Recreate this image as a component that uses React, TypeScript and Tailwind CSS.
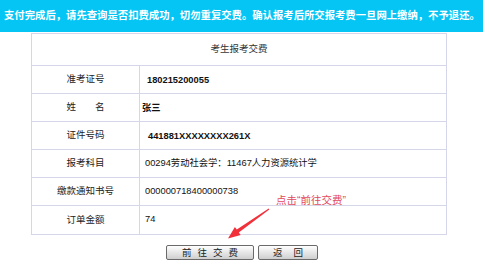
import React from 'react';

const FONT = { fontFamily: '"Liberation Sans", "Noto Sans CJK SC", sans-serif' };

type Row = { label: React.ReactNode; value: string; bold?: boolean; pad: string };

const rows: Row[] = [
  { label: '准考证号', value: '180215200055', bold: true, pad: 'pl-[7px]' },
  {
    label: (
      <span className="flex gap-[19px]">
        <span>姓</span>
        <span>名</span>
      </span>
    ),
    value: '张三',
    bold: true,
    pad: 'pl-[2px]',
  },
  { label: '证件号码', value: '441881XXXXXXXX261X', bold: true, pad: 'pl-[8px]' },
  { label: '报考科目', value: '00294劳动社会学：11467人力资源统计学', pad: 'pl-[5px]' },
  { label: '缴款通知书号', value: '000000718400000738', pad: 'pl-[5px]' },
  { label: '订单金额', value: '74', pad: 'pl-[5px]' },
];

function Arrow() {
  // 红色标注箭头
  return (
    <svg
      className="absolute left-0 top-0 pointer-events-none"
      width="483"
      height="260"
      viewBox="0 0 483 260"
    >
      <polygon
        points="268.7,208.6 236.8,229.5 234.9,226.9 228,238.5 240.7,235.1 238.8,232.5 269.3,209.6"
        fill="#f2303a"
      />
    </svg>
  );
}

export default function App() {
  return (
    <div className="relative w-[483px] h-[260px] overflow-hidden bg-white" style={FONT}>
      {/* 提示条 */}
      <div className="h-[32px] bg-[#05c5f5] flex items-center pl-[4px]">
        <span className="text-white font-bold text-[10.35px] whitespace-nowrap">
          支付完成后，请先查询是否扣费成功，切勿重复交费。确认报考后所交报考费一旦网上缴纳，不予退还。
        </span>
      </div>

      {/* 表格 */}
      <div className="ml-[31px] mt-[1px] w-[416px] border border-[#d6d6ea]">
        <div className="h-[32px] border-b border-[#d6d6ea] flex items-center justify-center text-[9.5px] text-[#333]">
          考生报考交费
        </div>
        {rows.map((r, i) => (
          <div
            key={i}
            className={`h-[28px] flex ${i < rows.length - 1 ? 'border-b border-[#d6d6ea]' : ''}`}
          >
            <div className="w-[108px] shrink-0 border-r border-[#d6d6ea] flex items-center justify-center text-[9.5px] text-[#222]">
              {r.label}
            </div>
            <div
              className={`flex items-center ${r.pad} text-[9.3px] text-[#111] whitespace-nowrap ${
                r.bold ? 'font-bold pt-[2px]' : ''
              }`}
            >
              {r.value}
            </div>
          </div>
        ))}
      </div>

      {/* 按钮 */}
      <div className="mt-[10px] flex justify-center gap-[4px] pl-[1px]">
        <button className="w-[88px] h-[15px] rounded-[2px] border border-[#6a6a6a] bg-gradient-to-b from-white to-[#cfcfcf] text-[9.5px] text-[#222] flex items-center justify-center tracking-[6px] pl-[6px] leading-none">
          前往交费
        </button>
        <button className="w-[60px] h-[15px] rounded-[2px] border border-[#6a6a6a] bg-gradient-to-b from-white to-[#cfcfcf] text-[9.5px] text-[#222] flex items-center justify-center tracking-[11px] pl-[11px] leading-none">
          返回
        </button>
      </div>

      {/* 标注 */}
      <div className="absolute left-[276px] top-[195px] text-[10.5px] text-[#e24a5e] whitespace-nowrap leading-none">
        点击“前往交费”
      </div>
      <Arrow />
    </div>
  );
}
